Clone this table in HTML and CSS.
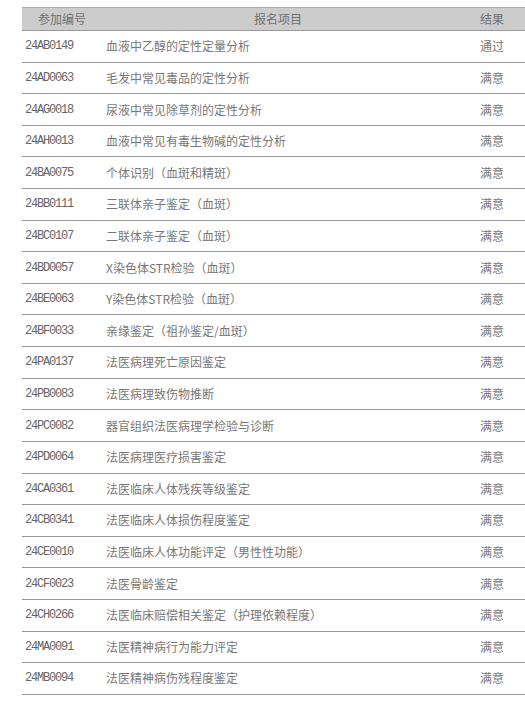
FILE: index.html
```html
<!DOCTYPE html>
<html lang="zh-CN">
<head>
<meta charset="utf-8">
<title>结果</title>
<link rel="stylesheet" href="styles.css">
</head>
<body>
<table class="results">
  <colgroup>
    <col class="c-code">
    <col class="c-item">
    <col class="c-res">
  </colgroup>
  <thead>
    <tr><th>参加编号</th><th>报名项目</th><th>结果</th></tr>
  </thead>
  <tbody>
    <tr><td class="code">24AB0149</td><td>血液中乙醇的定性定量分析</td><td class="res">通过</td></tr>
    <tr><td class="code">24AD0063</td><td>毛发中常见毒品的定性分析</td><td class="res">满意</td></tr>
    <tr><td class="code">24AG0018</td><td>尿液中常见除草剂的定性分析</td><td class="res">满意</td></tr>
    <tr><td class="code">24AH0013</td><td>血液中常见有毒生物碱的定性分析</td><td class="res">满意</td></tr>
    <tr><td class="code">24BA0075</td><td>个体识别（血斑和精斑）</td><td class="res">满意</td></tr>
    <tr><td class="code">24BB0111</td><td>三联体亲子鉴定（血斑）</td><td class="res">满意</td></tr>
    <tr><td class="code">24BC0107</td><td>二联体亲子鉴定（血斑）</td><td class="res">满意</td></tr>
    <tr><td class="code">24BD0057</td><td>X染色体STR检验（血斑）</td><td class="res">满意</td></tr>
    <tr><td class="code">24BE0063</td><td>Y染色体STR检验（血斑）</td><td class="res">满意</td></tr>
    <tr><td class="code">24BF0033</td><td>亲缘鉴定（祖孙鉴定/血斑）</td><td class="res">满意</td></tr>
    <tr><td class="code">24PA0137</td><td>法医病理死亡原因鉴定</td><td class="res">满意</td></tr>
    <tr><td class="code">24PB0083</td><td>法医病理致伤物推断</td><td class="res">满意</td></tr>
    <tr><td class="code">24PC0082</td><td>器官组织法医病理学检验与诊断</td><td class="res">满意</td></tr>
    <tr><td class="code">24PD0064</td><td>法医病理医疗损害鉴定</td><td class="res">满意</td></tr>
    <tr><td class="code">24CA0361</td><td>法医临床人体残疾等级鉴定</td><td class="res">满意</td></tr>
    <tr><td class="code">24CB0341</td><td>法医临床人体损伤程度鉴定</td><td class="res">满意</td></tr>
    <tr><td class="code">24CE0010</td><td>法医临床人体功能评定（男性性功能）</td><td class="res">满意</td></tr>
    <tr><td class="code">24CF0023</td><td>法医骨龄鉴定</td><td class="res">满意</td></tr>
    <tr><td class="code">24CH0266</td><td>法医临床赔偿相关鉴定（护理依赖程度）</td><td class="res">满意</td></tr>
    <tr><td class="code">24MA0091</td><td>法医精神病行为能力评定</td><td class="res">满意</td></tr>
    <tr><td class="code">24MB0094</td><td>法医精神病伤残程度鉴定</td><td class="res">满意</td></tr>
  </tbody>
</table>
</body>
</html>
```

FILE: styles.css
```css
html, body {
  margin: 0;
  padding: 0;
  background: #fff;
  overflow: hidden;
}

body {
  padding: 7px 0 0 22px;
  font-family: "Noto Sans CJK SC", "Liberation Sans", sans-serif;
  font-size: 12px;
  color: #777;
}

.results {
  width: 508px;
  border-collapse: collapse;
  table-layout: fixed;
}

.c-code { width: 80px; }
.c-item { width: 352px; }
.c-res { width: 76px; }

.results th {
  height: 22px;
  padding: 0;
  background: #cccccc;
  font-weight: normal;
  color: #707070;
  text-align: center;
  border-top: 1px solid #aaa;
  border-bottom: 1px solid #999;
  line-height: 22px;
}

.results td {
  height: 30.62px;
  padding: 0 0 0 4px;
  border-bottom: 1px solid #999;
  line-height: 16px;
  vertical-align: middle;
  white-space: nowrap;
}

.results td.code {
  padding-left: 3px;
  font-family: "Liberation Mono", monospace;
  font-size: 12px;
  letter-spacing: -1.2px;
  color: #666;
}

.results td.res {
  padding: 0;
  text-align: center;
}
```
